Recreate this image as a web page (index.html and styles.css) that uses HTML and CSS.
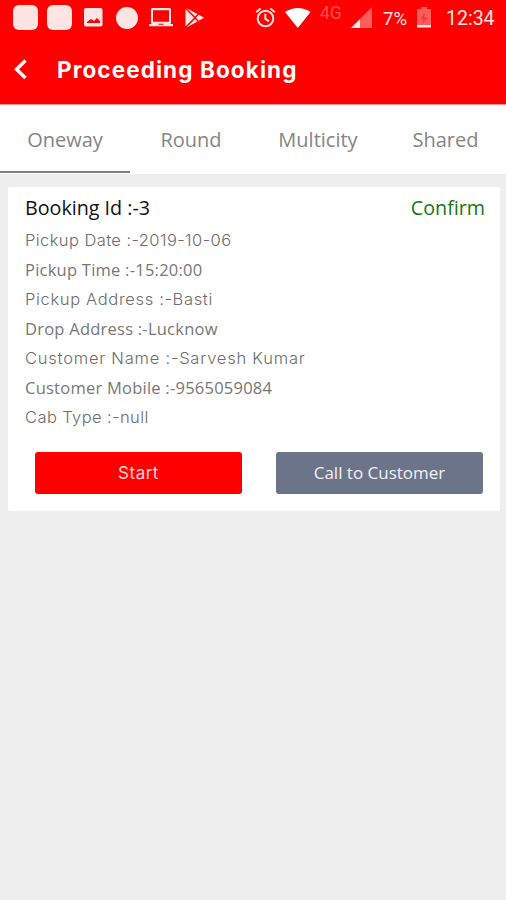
FILE: index.html
```html
<!DOCTYPE html>
<html lang="en">
<head>
<meta charset="utf-8">
<title>Proceeding Booking</title>
<link rel="stylesheet" href="styles.css">
</head>
<body>
<header class="top">
  <div class="status">
    <div class="status-left">
      <i class="app-tile"></i>
      <i class="app-tile"></i>
      <svg class="picture" width="19" height="19" viewBox="0 0 19 19"><path fill-rule="evenodd" d="M2 0h14.500q2 0 2 2v14.500q0 2-2 2H2q-2 0-2-2V2q0-2 2-2zM3 15h13v-2l-3-3-3 3-3-2-4 3z"/></svg>
      <i class="dot"></i>
      <svg class="laptop" width="24" height="20" viewBox="0 0 24 20"><path fill-rule="evenodd" d="M3.500 0h17q1.500 0 1.500 1.500v13q0 1.500-1.500 1.500H24v2.200H0V16h3.500Q2 16 2 14.500v-13Q2 0 3.500 0zM4 2.300v11.400h16V2.300zM9.500 15.700v1h5v-1z"/></svg>
      <svg class="play" width="20" height="20" viewBox="0 0 20 20"><path d="M.5 1v17.500L9 9.800zM1.500.2l8.500 8.400 2.500-2.500zM1.500 19.400 10 11l2.500 2.500zM13.700 6.800 10.800 9.800l2.900 3 5.500-3z"/></svg>
    </div>
    <div class="status-right">
      <svg class="alarm" width="21" height="21" viewBox="0 0 21 21"><circle cx="10.500" cy="11.500" r="7.800"/><path d="M1.200 5.200 5.500 1.500M15.500 1.500l4.300 3.700M10.300 6.800v5l3.700 2.500"/></svg>
      <svg class="wifi" width="26" height="20" viewBox="0 0 26 20"><path d="M0 4Q13-4 25.500 4L12.800 20z"/></svg>
      <span class="network">4G</span>
      <svg class="signal" width="21" height="21" viewBox="0 0 21 21"><path class="faint" d="M21 0v21H0z"/><path d="M9 12v9H0z"/></svg>
      <span class="percent">7%</span>
      <svg class="battery" width="14" height="21" viewBox="0 0 14 21"><path class="faint" d="M4 0h6v2h4v16H0V2h4z"/><path class="bolt" d="m7.500 5-4 7H6v5l4.500-7H7.500z"/><path d="M0 18h14v2.500H0z"/></svg>
      <span class="clock">12:34</span>
    </div>
  </div>
  <div class="title-bar">
    <svg class="back" width="14" height="21" viewBox="0 0 14 21"><path d="M11.500 1.500 2.500 10.300l9 8.700"/></svg>
    <h1><span>Proceeding Booking</span></h1>
  </div>
</header>
<nav class="tabs">
  <a class="tab active">Oneway</a>
  <a class="tab">Round</a>
  <a class="tab">Multicity</a>
  <a class="tab">Shared</a>
</nav>
<main class="card">
  <div class="card-head"><span class="booking">Booking Id :-3</span><span class="state">Confirm</span></div>
  <div class="details">
    <p class="wide date">Pickup Date :-2019-10-06</p>
    <p>Pickup Time :-15:20:00</p>
    <p class="wide address">Pickup Address :-Basti</p>
    <p>Drop Address :-Lucknow</p>
    <p class="wide name">Customer Name :-Sarvesh Kumar</p>
    <p>Customer Mobile :-9565059084</p>
    <p class="wide cab">Cab Type :-null</p>
  </div>
  <div class="actions">
    <button class="start">Start</button>
    <button class="call">Call to Customer</button>
  </div>
</main>
</body>
</html>
```
FILE: styles.css
```css
* { box-sizing: border-box; }
body { margin: 0; min-height: 900px; background: #eee; font-family: "Open Sans", sans-serif; }
svg { display: block; flex: none; }
.top { height: 105px; background: #f00; border-bottom: 1px solid #ff8d8d; color: #fff; }
.status { height: 35px; display: flex; justify-content: space-between; padding: 0 11px 0 13px; font-family: Roboto, sans-serif; }
.status-left, .status-right { display: flex; align-items: center; fill: #ffe4e4; }
.app-tile { width: 25px; height: 25px; margin-right: 9px; border-radius: 6px; background: #ffe4e4; }
.picture { margin-left: 3px; }
.dot { width: 22px; height: 22px; margin: 0 11px 0 13px; border-radius: 50%; background: #ffe4e4; }
.play { margin-left: 12px; }
.alarm { fill: none; stroke: #ffe0e0; stroke-width: 2; }
.wifi { margin-left: 9px; fill: #fff; }
.network { width: 30px; padding-left: 9px; font-size: 17.500px; line-height: 20px; margin-bottom: 9px; white-space: nowrap; color: #ff5252; display: flex; }
.signal { margin-left: 10px; }
.faint { fill: #ff5c5c; }
.bolt { fill: #ff3a3a; }
.percent { width: 25px; margin: 2px 9px 0 11px; font-size: 18.500px; color: #ffe4e4; }
.clock { width: 49px; margin: 2px 0 0 15px; font-size: 19.500px; color: #ffe4e4; white-space: nowrap; }
.title-bar { height: 69px; display: flex; align-items: center; padding-left: 14px; }
.back { fill: none; stroke: #fff; stroke-width: 3.500; }
h1 { margin: 1px 0 0 29px; font: 700 22.500px/30px Inter, sans-serif; letter-spacing: 1.100px; }
.tabs { height: 69px; display: grid; grid-template-columns: 130px 122px 132px 123px; background: #fff; }
.tab { height: 68px; border-bottom: 2px solid transparent; text-align: center; font-size: 20px; line-height: 70px; color: #858585; }
.tab.active { border-color: #7c827e; }
.card { width: 492px; height: 324px; margin: 13px 0 0 8px; padding: 7px 15px 0 17px; background: #fff; border-radius: 2px; }
.card-head { display: flex; justify-content: space-between; height: 30px; font-size: 19.700px; line-height: 28px; color: #111; }
.state { color: #187518; }
.details p { margin: 0; height: 29.500px; font-size: 16.500px; line-height: 31px; letter-spacing: .24px; color: #777; white-space: nowrap; }
.details .wide { font-family: Inter, sans-serif; font-weight: 300; line-height: 33px; color: #6c6c6c; }
.details .date { letter-spacing: .42px; }
.details .address { letter-spacing: .66px; }
.details .name { letter-spacing: .78px; }
.details .cab { letter-spacing: .4px; }
.actions { display: flex; gap: 34px; margin: 21px 0 0 10px; }
button { width: 207px; height: 42px; padding: 0; border: 0; border-radius: 3px; color: #f0f1f6; font: 17px "Open Sans", sans-serif; }
.start { background: #f00; color: #ffd6d6; font-family: Inter, sans-serif; letter-spacing: .5px; }
.call { background: #6c748a; }
```
